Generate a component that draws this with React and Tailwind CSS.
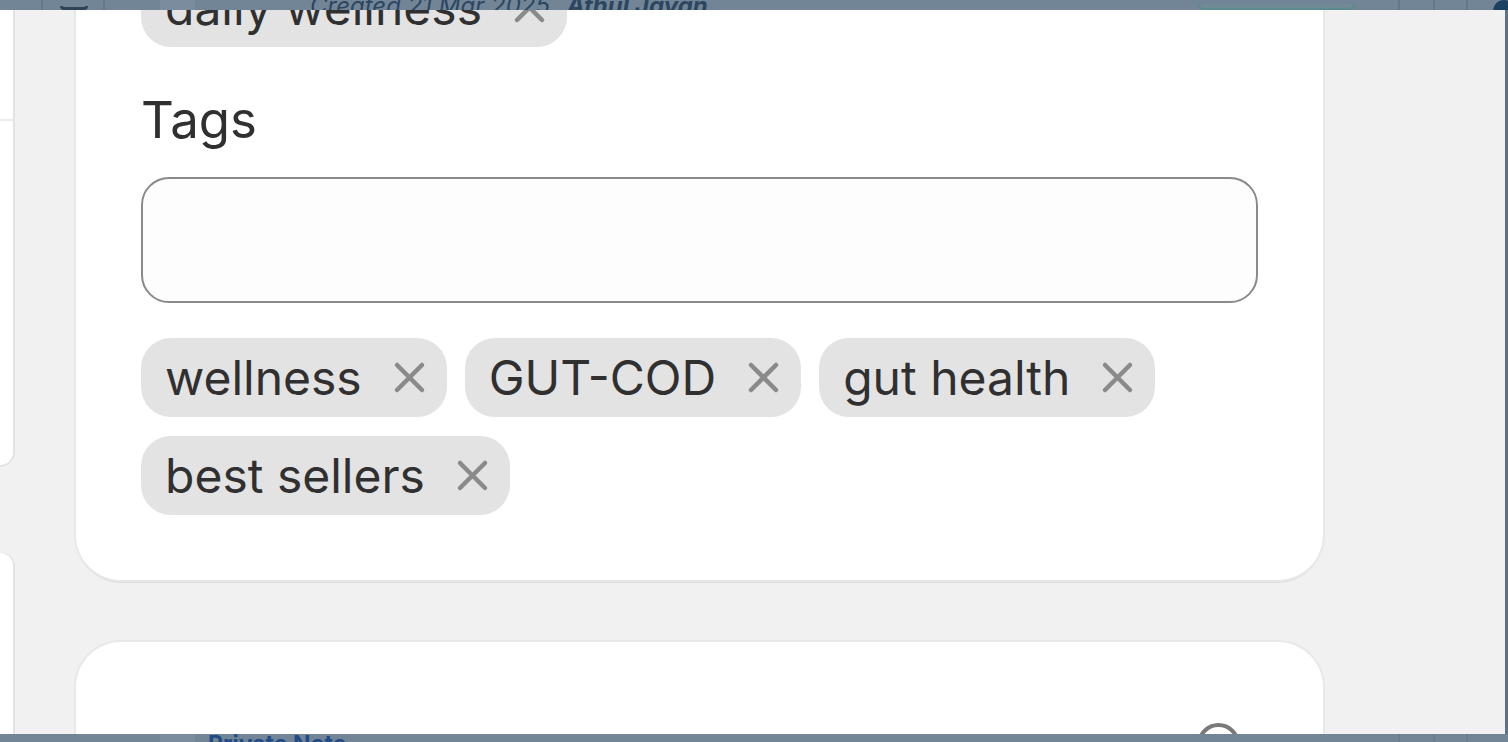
import React from "react";

function CloseIcon() {
  return (
    <svg width="35" height="35" viewBox="0 0 35 35" className="shrink-0">
      <path d="M5 5 L30 30 M30 5 L5 30" stroke="#8a8a8a" strokeWidth="4.5" strokeLinecap="round" />
    </svg>
  );
}

function Chip({ label }) {
  return (
    <div className="flex h-[79px] items-center gap-[30px] rounded-[30px] bg-[#e3e3e3] pl-[24px] pr-[20px]">
      <span className="text-[48px] leading-none text-[#303030]">{label}</span>
      <CloseIcon />
    </div>
  );
}

function Divider({ color = "bg-[#65788a]" }) {
  return <div className={`h-full w-[2px] shrink-0 ${color}`}></div>;
}

export default function App() {
  const tags = ["wellness", "GUT-COD", "gut health", "best sellers"];

  return (
    <div className="relative h-[742px] w-[1508px] overflow-hidden bg-[#f1f1f1] font-['Inter',sans-serif]">
      <div className="flex h-full">
        {/* left column, mostly off screen */}
        <div className="flex w-[13px] shrink-0 flex-col gap-[88px]">
          <div className="h-[465px] rounded-br-[42px] bg-white pt-[119px] shadow-[2px_0_0_#e3e3e3,0_2px_0_#e3e3e3]">
            <div className="h-[2px] bg-[#ebebeb]"></div>
          </div>
          <div className="flex-1 rounded-tr-[42px] bg-white shadow-[2px_0_0_#e3e3e3]"></div>
        </div>

        {/* main column */}
        <div className="ml-[63px] -mt-[120px] flex w-[1247px] shrink-0 flex-col gap-[62px]">
          <div className="rounded-[45px] bg-white px-[65px] pb-[65px] pt-[88px] shadow-[0_0_0_2px_#e8e8e8,0_3px_0_#dcdcdc]">
            <div className="flex flex-wrap gap-x-[18px] gap-y-[19px]">
              <Chip label="daily wellness" />
            </div>
            <div className="mt-[43px] text-[51px] leading-[60px] text-[#303030]">Tags</div>
            <div className="mt-[27px] h-[126px] rounded-[28px] border-2 border-[#8a8a8a] bg-[#fdfdfd]"></div>
            <div className="mt-[35px] flex flex-wrap gap-x-[18px] gap-y-[19px]">
              {tags.map((t) => (
                <Chip key={t} label={t} />
              ))}
            </div>
          </div>
          <div className="flex flex-1 justify-end rounded-t-[45px] bg-white pr-[83px] pt-[81px] shadow-[0_0_0_2px_#e8e8e8]">
            <div className="h-[43px] w-[43px] shrink-0 rounded-full border-[4px] border-[#7a7a7a]"></div>
          </div>
        </div>

        <div className="flex-1"></div>
        <div className="w-[3px] bg-[#5f7283]"></div>
      </div>

      {/* top overlay strip */}
      <div className="absolute left-0 right-0 top-0 flex h-[10px] items-end overflow-hidden bg-[#728597]">
        <div className="w-[41px] shrink-0"></div>
        <Divider />
        <div className="flex h-full w-[60px] shrink-0 items-end pl-[17px]">
          <div className="h-[4px] w-[28px] rounded-b-[6px] border-x-[3px] border-b-[3px] border-[#2f4356]"></div>
        </div>
        <Divider />
        <div className="w-[55px] shrink-0"></div>
        <div className="h-full w-[35px] shrink-0 bg-[#7a8c9d]"></div>
        <div className="w-[115px] shrink-0"></div>
        <div className="flex h-full w-[888px] shrink-0 items-end">
          <div className="mb-[-9px] whitespace-nowrap text-[24px] italic leading-[26px] text-[#2c4660]">
            Created 21 Mar 2025 <span className="ml-[10px] font-bold">Athul Jayan</span>
          </div>
        </div>
        <div className="flex h-full w-[200px] shrink-0 items-end">
          <div className="h-[6px] w-[157px] rounded-b-[8px] border-x-[2px] border-b-[2px] border-[#5c8b8f] bg-[#6f8a94]"></div>
        </div>
        <Divider />
        <div className="w-[33px] shrink-0"></div>
        <Divider />
        <div className="w-[31px] shrink-0"></div>
        <Divider />
        <div className="w-[25px] shrink-0"></div>
        <div className="h-[22px] w-[22px] shrink-0 self-start rounded-full bg-[#1c4060]"></div>
      </div>

      {/* bottom overlay strip */}
      <div className="absolute bottom-0 left-0 right-0 flex h-[8px] overflow-hidden bg-[#728597]">
        <div className="w-[160px] shrink-0"></div>
        <div className="h-full w-[35px] shrink-0 bg-[#7a8c9d]"></div>
        <div className="w-[13px] shrink-0"></div>
        <div className="w-[1190px] shrink-0">
          <div className="mt-[-4px] whitespace-nowrap text-[23px] font-bold leading-[28px] text-[#1f4b87]">Private Note</div>
        </div>
        <Divider color="bg-[#6a7d8f]" />
        <div className="w-[33px] shrink-0"></div>
        <Divider color="bg-[#6a7d8f]" />
        <div className="w-[31px] shrink-0"></div>
        <Divider color="bg-[#6a7d8f]" />
      </div>
    </div>
  );
}
